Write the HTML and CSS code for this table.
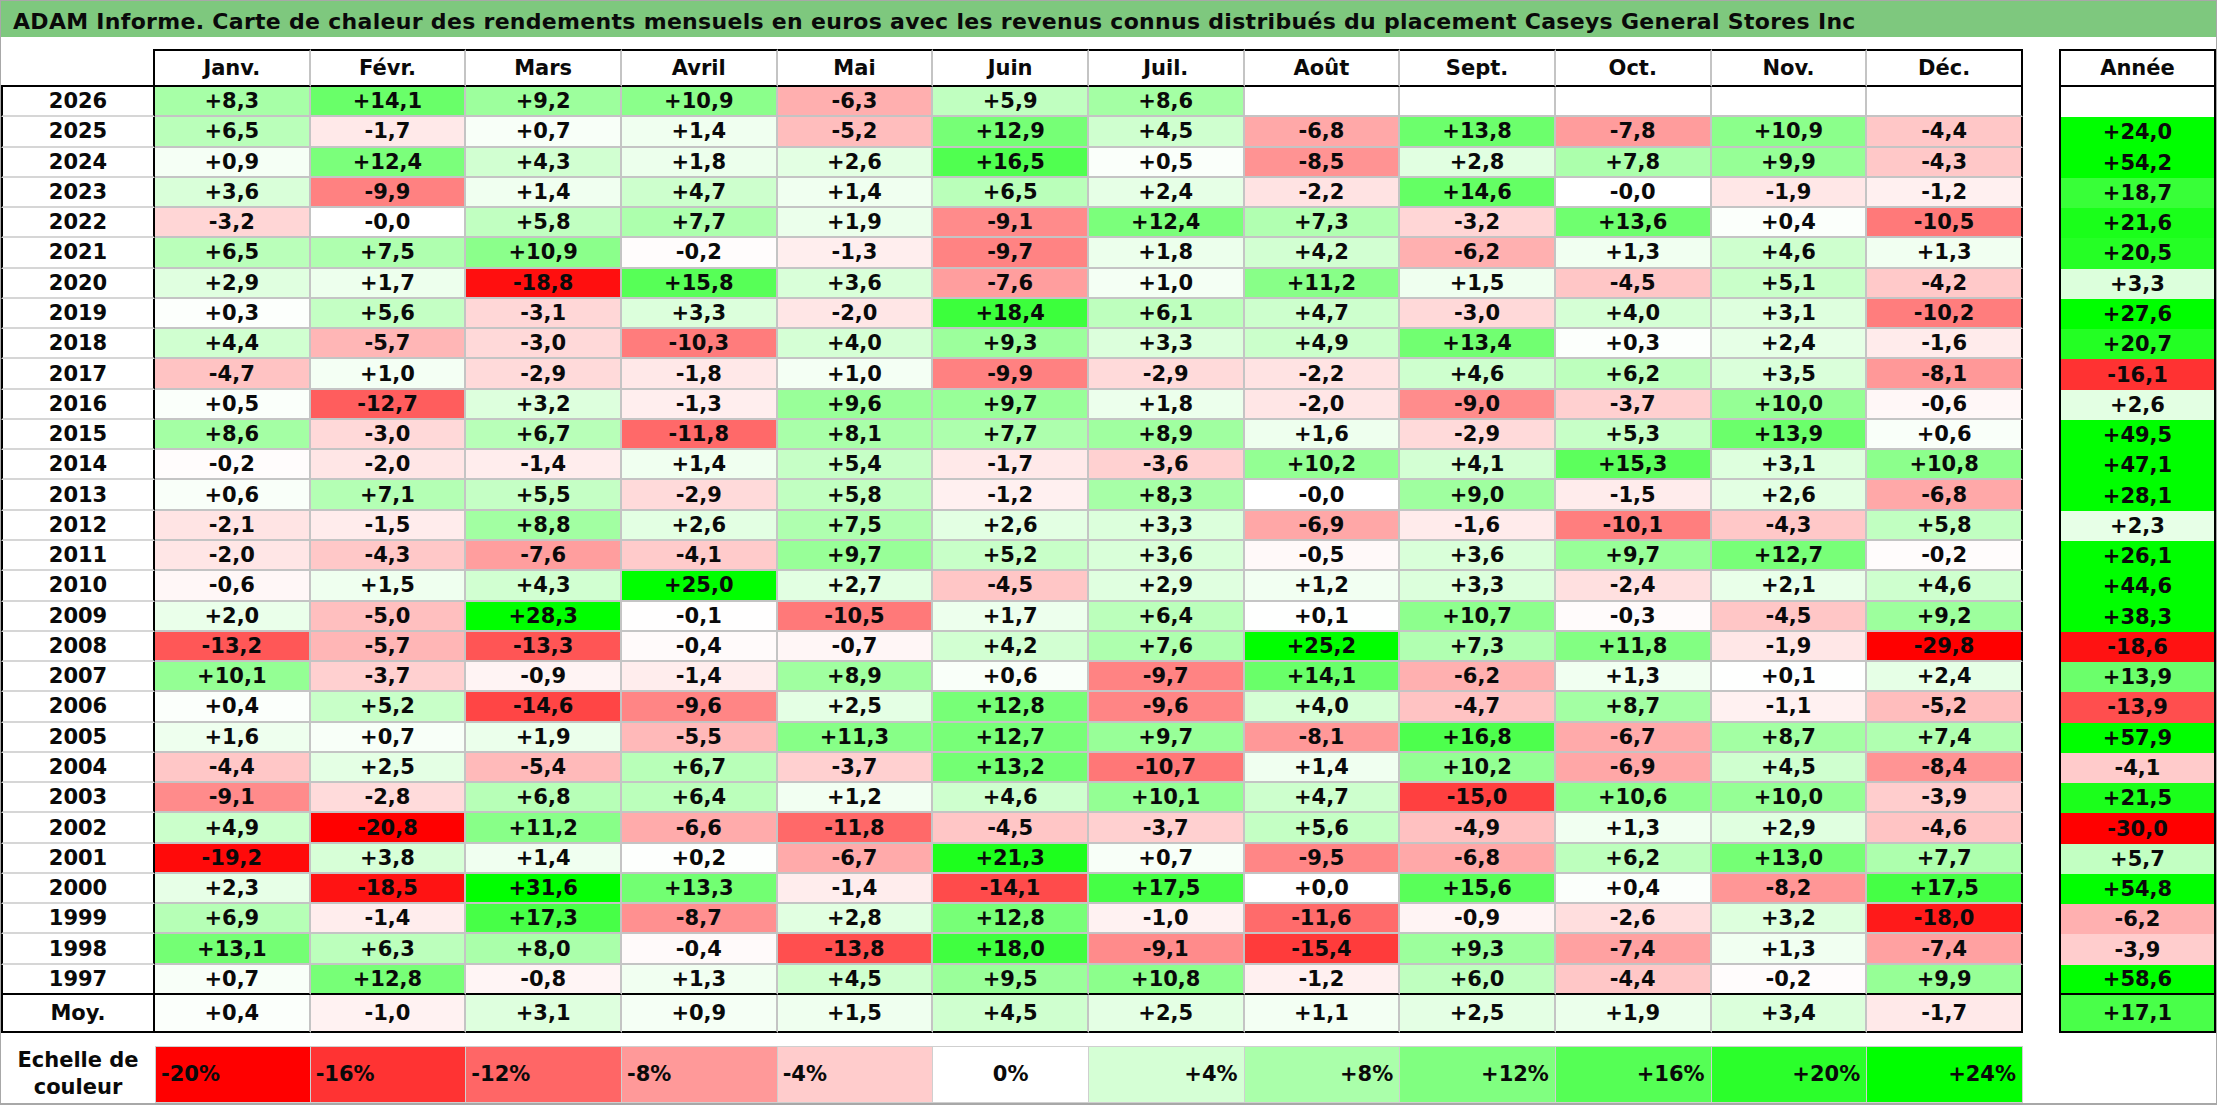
FILE: index.html
```html
<!DOCTYPE html>
<html lang="fr">
<head>
<meta charset="utf-8">
<title>ADAM Informe - Caseys General Stores Inc</title>
<link rel="stylesheet" href="styles.css">
</head>
<body>
<div class="page">
  <div class="title">ADAM Informe. Carte de chaleur des rendements mensuels en euros avec les revenus connus distribués du placement Caseys General Stores Inc</div>
  <div class="tables">
    <table class="heat">
      <colgroup><col class="yc"><col><col><col><col><col><col><col><col><col><col><col><col></colgroup>
      <thead>
        <tr><th class="corner"></th><th class="first">Janv.</th><th>Févr.</th><th>Mars</th><th>Avril</th><th>Mai</th><th>Juin</th><th>Juil.</th><th>Août</th><th>Sept.</th><th>Oct.</th><th>Nov.</th><th class="last">Déc.</th></tr>
      </thead>
      <tbody>
        <tr><th>2026</th><td style="--v:8.3">+8,3</td><td style="--v:14.1">+14,1</td><td style="--v:9.2">+9,2</td><td style="--v:10.9">+10,9</td><td style="--v:-6.3">-6,3</td><td style="--v:5.9">+5,9</td><td style="--v:8.6">+8,6</td><td></td><td></td><td></td><td></td><td></td></tr>
        <tr><th>2025</th><td style="--v:6.5">+6,5</td><td style="--v:-1.7">-1,7</td><td style="--v:0.7">+0,7</td><td style="--v:1.4">+1,4</td><td style="--v:-5.2">-5,2</td><td style="--v:12.9">+12,9</td><td style="--v:4.5">+4,5</td><td style="--v:-6.8">-6,8</td><td style="--v:13.8">+13,8</td><td style="--v:-7.8">-7,8</td><td style="--v:10.9">+10,9</td><td style="--v:-4.4">-4,4</td></tr>
        <tr><th>2024</th><td style="--v:0.9">+0,9</td><td style="--v:12.4">+12,4</td><td style="--v:4.3">+4,3</td><td style="--v:1.8">+1,8</td><td style="--v:2.6">+2,6</td><td style="--v:16.5">+16,5</td><td style="--v:0.5">+0,5</td><td style="--v:-8.5">-8,5</td><td style="--v:2.8">+2,8</td><td style="--v:7.8">+7,8</td><td style="--v:9.9">+9,9</td><td style="--v:-4.3">-4,3</td></tr>
        <tr><th>2023</th><td style="--v:3.6">+3,6</td><td style="--v:-9.9">-9,9</td><td style="--v:1.4">+1,4</td><td style="--v:4.7">+4,7</td><td style="--v:1.4">+1,4</td><td style="--v:6.5">+6,5</td><td style="--v:2.4">+2,4</td><td style="--v:-2.2">-2,2</td><td style="--v:14.6">+14,6</td><td style="--v:0">-0,0</td><td style="--v:-1.9">-1,9</td><td style="--v:-1.2">-1,2</td></tr>
        <tr><th>2022</th><td style="--v:-3.2">-3,2</td><td style="--v:0">-0,0</td><td style="--v:5.8">+5,8</td><td style="--v:7.7">+7,7</td><td style="--v:1.9">+1,9</td><td style="--v:-9.1">-9,1</td><td style="--v:12.4">+12,4</td><td style="--v:7.3">+7,3</td><td style="--v:-3.2">-3,2</td><td style="--v:13.6">+13,6</td><td style="--v:0.4">+0,4</td><td style="--v:-10.5">-10,5</td></tr>
        <tr><th>2021</th><td style="--v:6.5">+6,5</td><td style="--v:7.5">+7,5</td><td style="--v:10.9">+10,9</td><td style="--v:-0.2">-0,2</td><td style="--v:-1.3">-1,3</td><td style="--v:-9.7">-9,7</td><td style="--v:1.8">+1,8</td><td style="--v:4.2">+4,2</td><td style="--v:-6.2">-6,2</td><td style="--v:1.3">+1,3</td><td style="--v:4.6">+4,6</td><td style="--v:1.3">+1,3</td></tr>
        <tr><th>2020</th><td style="--v:2.9">+2,9</td><td style="--v:1.7">+1,7</td><td style="--v:-18.8">-18,8</td><td style="--v:15.8">+15,8</td><td style="--v:3.6">+3,6</td><td style="--v:-7.6">-7,6</td><td style="--v:1.0">+1,0</td><td style="--v:11.2">+11,2</td><td style="--v:1.5">+1,5</td><td style="--v:-4.5">-4,5</td><td style="--v:5.1">+5,1</td><td style="--v:-4.2">-4,2</td></tr>
        <tr><th>2019</th><td style="--v:0.3">+0,3</td><td style="--v:5.6">+5,6</td><td style="--v:-3.1">-3,1</td><td style="--v:3.3">+3,3</td><td style="--v:-2.0">-2,0</td><td style="--v:18.4">+18,4</td><td style="--v:6.1">+6,1</td><td style="--v:4.7">+4,7</td><td style="--v:-3.0">-3,0</td><td style="--v:4.0">+4,0</td><td style="--v:3.1">+3,1</td><td style="--v:-10.2">-10,2</td></tr>
        <tr><th>2018</th><td style="--v:4.4">+4,4</td><td style="--v:-5.7">-5,7</td><td style="--v:-3.0">-3,0</td><td style="--v:-10.3">-10,3</td><td style="--v:4.0">+4,0</td><td style="--v:9.3">+9,3</td><td style="--v:3.3">+3,3</td><td style="--v:4.9">+4,9</td><td style="--v:13.4">+13,4</td><td style="--v:0.3">+0,3</td><td style="--v:2.4">+2,4</td><td style="--v:-1.6">-1,6</td></tr>
        <tr><th>2017</th><td style="--v:-4.7">-4,7</td><td style="--v:1.0">+1,0</td><td style="--v:-2.9">-2,9</td><td style="--v:-1.8">-1,8</td><td style="--v:1.0">+1,0</td><td style="--v:-9.9">-9,9</td><td style="--v:-2.9">-2,9</td><td style="--v:-2.2">-2,2</td><td style="--v:4.6">+4,6</td><td style="--v:6.2">+6,2</td><td style="--v:3.5">+3,5</td><td style="--v:-8.1">-8,1</td></tr>
        <tr><th>2016</th><td style="--v:0.5">+0,5</td><td style="--v:-12.7">-12,7</td><td style="--v:3.2">+3,2</td><td style="--v:-1.3">-1,3</td><td style="--v:9.6">+9,6</td><td style="--v:9.7">+9,7</td><td style="--v:1.8">+1,8</td><td style="--v:-2.0">-2,0</td><td style="--v:-9.0">-9,0</td><td style="--v:-3.7">-3,7</td><td style="--v:10.0">+10,0</td><td style="--v:-0.6">-0,6</td></tr>
        <tr><th>2015</th><td style="--v:8.6">+8,6</td><td style="--v:-3.0">-3,0</td><td style="--v:6.7">+6,7</td><td style="--v:-11.8">-11,8</td><td style="--v:8.1">+8,1</td><td style="--v:7.7">+7,7</td><td style="--v:8.9">+8,9</td><td style="--v:1.6">+1,6</td><td style="--v:-2.9">-2,9</td><td style="--v:5.3">+5,3</td><td style="--v:13.9">+13,9</td><td style="--v:0.6">+0,6</td></tr>
        <tr><th>2014</th><td style="--v:-0.2">-0,2</td><td style="--v:-2.0">-2,0</td><td style="--v:-1.4">-1,4</td><td style="--v:1.4">+1,4</td><td style="--v:5.4">+5,4</td><td style="--v:-1.7">-1,7</td><td style="--v:-3.6">-3,6</td><td style="--v:10.2">+10,2</td><td style="--v:4.1">+4,1</td><td style="--v:15.3">+15,3</td><td style="--v:3.1">+3,1</td><td style="--v:10.8">+10,8</td></tr>
        <tr><th>2013</th><td style="--v:0.6">+0,6</td><td style="--v:7.1">+7,1</td><td style="--v:5.5">+5,5</td><td style="--v:-2.9">-2,9</td><td style="--v:5.8">+5,8</td><td style="--v:-1.2">-1,2</td><td style="--v:8.3">+8,3</td><td style="--v:0">-0,0</td><td style="--v:9.0">+9,0</td><td style="--v:-1.5">-1,5</td><td style="--v:2.6">+2,6</td><td style="--v:-6.8">-6,8</td></tr>
        <tr><th>2012</th><td style="--v:-2.1">-2,1</td><td style="--v:-1.5">-1,5</td><td style="--v:8.8">+8,8</td><td style="--v:2.6">+2,6</td><td style="--v:7.5">+7,5</td><td style="--v:2.6">+2,6</td><td style="--v:3.3">+3,3</td><td style="--v:-6.9">-6,9</td><td style="--v:-1.6">-1,6</td><td style="--v:-10.1">-10,1</td><td style="--v:-4.3">-4,3</td><td style="--v:5.8">+5,8</td></tr>
        <tr><th>2011</th><td style="--v:-2.0">-2,0</td><td style="--v:-4.3">-4,3</td><td style="--v:-7.6">-7,6</td><td style="--v:-4.1">-4,1</td><td style="--v:9.7">+9,7</td><td style="--v:5.2">+5,2</td><td style="--v:3.6">+3,6</td><td style="--v:-0.5">-0,5</td><td style="--v:3.6">+3,6</td><td style="--v:9.7">+9,7</td><td style="--v:12.7">+12,7</td><td style="--v:-0.2">-0,2</td></tr>
        <tr><th>2010</th><td style="--v:-0.6">-0,6</td><td style="--v:1.5">+1,5</td><td style="--v:4.3">+4,3</td><td style="--v:25.0">+25,0</td><td style="--v:2.7">+2,7</td><td style="--v:-4.5">-4,5</td><td style="--v:2.9">+2,9</td><td style="--v:1.2">+1,2</td><td style="--v:3.3">+3,3</td><td style="--v:-2.4">-2,4</td><td style="--v:2.1">+2,1</td><td style="--v:4.6">+4,6</td></tr>
        <tr><th>2009</th><td style="--v:2.0">+2,0</td><td style="--v:-5.0">-5,0</td><td style="--v:28.3">+28,3</td><td style="--v:-0.1">-0,1</td><td style="--v:-10.5">-10,5</td><td style="--v:1.7">+1,7</td><td style="--v:6.4">+6,4</td><td style="--v:0.1">+0,1</td><td style="--v:10.7">+10,7</td><td style="--v:-0.3">-0,3</td><td style="--v:-4.5">-4,5</td><td style="--v:9.2">+9,2</td></tr>
        <tr><th>2008</th><td style="--v:-13.2">-13,2</td><td style="--v:-5.7">-5,7</td><td style="--v:-13.3">-13,3</td><td style="--v:-0.4">-0,4</td><td style="--v:-0.7">-0,7</td><td style="--v:4.2">+4,2</td><td style="--v:7.6">+7,6</td><td style="--v:25.2">+25,2</td><td style="--v:7.3">+7,3</td><td style="--v:11.8">+11,8</td><td style="--v:-1.9">-1,9</td><td style="--v:-29.8">-29,8</td></tr>
        <tr><th>2007</th><td style="--v:10.1">+10,1</td><td style="--v:-3.7">-3,7</td><td style="--v:-0.9">-0,9</td><td style="--v:-1.4">-1,4</td><td style="--v:8.9">+8,9</td><td style="--v:0.6">+0,6</td><td style="--v:-9.7">-9,7</td><td style="--v:14.1">+14,1</td><td style="--v:-6.2">-6,2</td><td style="--v:1.3">+1,3</td><td style="--v:0.1">+0,1</td><td style="--v:2.4">+2,4</td></tr>
        <tr><th>2006</th><td style="--v:0.4">+0,4</td><td style="--v:5.2">+5,2</td><td style="--v:-14.6">-14,6</td><td style="--v:-9.6">-9,6</td><td style="--v:2.5">+2,5</td><td style="--v:12.8">+12,8</td><td style="--v:-9.6">-9,6</td><td style="--v:4.0">+4,0</td><td style="--v:-4.7">-4,7</td><td style="--v:8.7">+8,7</td><td style="--v:-1.1">-1,1</td><td style="--v:-5.2">-5,2</td></tr>
        <tr><th>2005</th><td style="--v:1.6">+1,6</td><td style="--v:0.7">+0,7</td><td style="--v:1.9">+1,9</td><td style="--v:-5.5">-5,5</td><td style="--v:11.3">+11,3</td><td style="--v:12.7">+12,7</td><td style="--v:9.7">+9,7</td><td style="--v:-8.1">-8,1</td><td style="--v:16.8">+16,8</td><td style="--v:-6.7">-6,7</td><td style="--v:8.7">+8,7</td><td style="--v:7.4">+7,4</td></tr>
        <tr><th>2004</th><td style="--v:-4.4">-4,4</td><td style="--v:2.5">+2,5</td><td style="--v:-5.4">-5,4</td><td style="--v:6.7">+6,7</td><td style="--v:-3.7">-3,7</td><td style="--v:13.2">+13,2</td><td style="--v:-10.7">-10,7</td><td style="--v:1.4">+1,4</td><td style="--v:10.2">+10,2</td><td style="--v:-6.9">-6,9</td><td style="--v:4.5">+4,5</td><td style="--v:-8.4">-8,4</td></tr>
        <tr><th>2003</th><td style="--v:-9.1">-9,1</td><td style="--v:-2.8">-2,8</td><td style="--v:6.8">+6,8</td><td style="--v:6.4">+6,4</td><td style="--v:1.2">+1,2</td><td style="--v:4.6">+4,6</td><td style="--v:10.1">+10,1</td><td style="--v:4.7">+4,7</td><td style="--v:-15.0">-15,0</td><td style="--v:10.6">+10,6</td><td style="--v:10.0">+10,0</td><td style="--v:-3.9">-3,9</td></tr>
        <tr><th>2002</th><td style="--v:4.9">+4,9</td><td style="--v:-20.8">-20,8</td><td style="--v:11.2">+11,2</td><td style="--v:-6.6">-6,6</td><td style="--v:-11.8">-11,8</td><td style="--v:-4.5">-4,5</td><td style="--v:-3.7">-3,7</td><td style="--v:5.6">+5,6</td><td style="--v:-4.9">-4,9</td><td style="--v:1.3">+1,3</td><td style="--v:2.9">+2,9</td><td style="--v:-4.6">-4,6</td></tr>
        <tr><th>2001</th><td style="--v:-19.2">-19,2</td><td style="--v:3.8">+3,8</td><td style="--v:1.4">+1,4</td><td style="--v:0.2">+0,2</td><td style="--v:-6.7">-6,7</td><td style="--v:21.3">+21,3</td><td style="--v:0.7">+0,7</td><td style="--v:-9.5">-9,5</td><td style="--v:-6.8">-6,8</td><td style="--v:6.2">+6,2</td><td style="--v:13.0">+13,0</td><td style="--v:7.7">+7,7</td></tr>
        <tr><th>2000</th><td style="--v:2.3">+2,3</td><td style="--v:-18.5">-18,5</td><td style="--v:31.6">+31,6</td><td style="--v:13.3">+13,3</td><td style="--v:-1.4">-1,4</td><td style="--v:-14.1">-14,1</td><td style="--v:17.5">+17,5</td><td style="--v:0">+0,0</td><td style="--v:15.6">+15,6</td><td style="--v:0.4">+0,4</td><td style="--v:-8.2">-8,2</td><td style="--v:17.5">+17,5</td></tr>
        <tr><th>1999</th><td style="--v:6.9">+6,9</td><td style="--v:-1.4">-1,4</td><td style="--v:17.3">+17,3</td><td style="--v:-8.7">-8,7</td><td style="--v:2.8">+2,8</td><td style="--v:12.8">+12,8</td><td style="--v:-1.0">-1,0</td><td style="--v:-11.6">-11,6</td><td style="--v:-0.9">-0,9</td><td style="--v:-2.6">-2,6</td><td style="--v:3.2">+3,2</td><td style="--v:-18.0">-18,0</td></tr>
        <tr><th>1998</th><td style="--v:13.1">+13,1</td><td style="--v:6.3">+6,3</td><td style="--v:8.0">+8,0</td><td style="--v:-0.4">-0,4</td><td style="--v:-13.8">-13,8</td><td style="--v:18.0">+18,0</td><td style="--v:-9.1">-9,1</td><td style="--v:-15.4">-15,4</td><td style="--v:9.3">+9,3</td><td style="--v:-7.4">-7,4</td><td style="--v:1.3">+1,3</td><td style="--v:-7.4">-7,4</td></tr>
        <tr class="lastrow"><th>1997</th><td style="--v:0.7">+0,7</td><td style="--v:12.8">+12,8</td><td style="--v:-0.8">-0,8</td><td style="--v:1.3">+1,3</td><td style="--v:4.5">+4,5</td><td style="--v:9.5">+9,5</td><td style="--v:10.8">+10,8</td><td style="--v:-1.2">-1,2</td><td style="--v:6.0">+6,0</td><td style="--v:-4.4">-4,4</td><td style="--v:-0.2">-0,2</td><td style="--v:9.9">+9,9</td></tr>
      </tbody>
      <tfoot>
        <tr><th>Moy.</th><td style="--v:0.4">+0,4</td><td style="--v:-1.0">-1,0</td><td style="--v:3.1">+3,1</td><td style="--v:0.9">+0,9</td><td style="--v:1.5">+1,5</td><td style="--v:4.5">+4,5</td><td style="--v:2.5">+2,5</td><td style="--v:1.1">+1,1</td><td style="--v:2.5">+2,5</td><td style="--v:1.9">+1,9</td><td style="--v:3.4">+3,4</td><td style="--v:-1.7">-1,7</td></tr>
      </tfoot>
    </table>

    <table class="annual">
      <thead><tr><th>Année</th></tr></thead>
      <tbody>
        <tr><td></td></tr>
        <tr><td style="--v:24.0">+24,0</td></tr>
        <tr><td style="--v:54.2">+54,2</td></tr>
        <tr><td style="--v:18.7">+18,7</td></tr>
        <tr><td style="--v:21.6">+21,6</td></tr>
        <tr><td style="--v:20.5">+20,5</td></tr>
        <tr><td style="--v:3.3">+3,3</td></tr>
        <tr><td style="--v:27.6">+27,6</td></tr>
        <tr><td style="--v:20.7">+20,7</td></tr>
        <tr><td style="--v:-16.1">-16,1</td></tr>
        <tr><td style="--v:2.6">+2,6</td></tr>
        <tr><td style="--v:49.5">+49,5</td></tr>
        <tr><td style="--v:47.1">+47,1</td></tr>
        <tr><td style="--v:28.1">+28,1</td></tr>
        <tr><td style="--v:2.3">+2,3</td></tr>
        <tr><td style="--v:26.1">+26,1</td></tr>
        <tr><td style="--v:44.6">+44,6</td></tr>
        <tr><td style="--v:38.3">+38,3</td></tr>
        <tr><td style="--v:-18.6">-18,6</td></tr>
        <tr><td style="--v:13.9">+13,9</td></tr>
        <tr><td style="--v:-13.9">-13,9</td></tr>
        <tr><td style="--v:57.9">+57,9</td></tr>
        <tr><td style="--v:-4.1">-4,1</td></tr>
        <tr><td style="--v:21.5">+21,5</td></tr>
        <tr><td style="--v:-30.0">-30,0</td></tr>
        <tr><td style="--v:5.7">+5,7</td></tr>
        <tr><td style="--v:54.8">+54,8</td></tr>
        <tr><td style="--v:-6.2">-6,2</td></tr>
        <tr><td style="--v:-3.9">-3,9</td></tr>
        <tr class="lastrow"><td style="--v:58.6">+58,6</td></tr>
      </tbody>
      <tfoot><tr><td style="--v:17.1">+17,1</td></tr></tfoot>
    </table>
  </div>

  <table class="legend">
    <colgroup><col class="yc"><col><col><col><col><col><col><col><col><col><col><col><col></colgroup>
    <tr>
      <th class="legend-label">Echelle de<br>couleur</th>
      <td class="neg first" style="--v:-20">-20%</td>
      <td class="neg" style="--v:-16">-16%</td>
      <td class="neg" style="--v:-12">-12%</td>
      <td class="neg" style="--v:-8">-8%</td>
      <td class="neg" style="--v:-4">-4%</td>
      <td class="zero" style="--v:0">0%</td>
      <td class="pos" style="--v:4">+4%</td>
      <td class="pos" style="--v:8">+8%</td>
      <td class="pos" style="--v:12">+12%</td>
      <td class="pos" style="--v:16">+16%</td>
      <td class="pos" style="--v:20">+20%</td>
      <td class="pos" style="--v:24">+24%</td>
    </tr>
  </table>
</div>
</body>
</html>
```

FILE: styles.css
```css
html, body {
  margin: 0;
  padding: 0;
  background: #ffffff;
}

body {
  font-family: "DejaVu Sans", "Liberation Sans", sans-serif;
  font-weight: bold;
  color: #0a0a0a;
}

.page {
  width: 2217px;
  height: 1105px;
  box-sizing: border-box;
  border: 1px solid #a8a8a8;
  border-bottom-width: 2px;
  overflow: hidden;
}

.title {
  height: 36px;
  box-sizing: border-box;
  padding: 8px 0 0 12px;
  background: #7ec87e;
  font-size: 22px;
  line-height: 25px;
  letter-spacing: 0.3px;
  white-space: nowrap;
}

.tables {
  display: flex;
  align-items: flex-start;
  margin-top: 12px;
}

table {
  border-spacing: 0;
  border-collapse: separate;
  table-layout: fixed;
}

th, td {
  padding: 0;
  text-align: center;
  vertical-align: middle;
  font-size: 21px;
  white-space: nowrap;
  box-sizing: border-box;
}

/* colour scale: red at -20, white at 0, green at +24 */
td {
  --v: 0;
  --r: clamp(0, 255 - 10.625 * var(--v), 255);
  --g: clamp(0, 255 + 12.75 * var(--v), 255);
  background: rgb(var(--r) var(--g) min(var(--r), var(--g)));
}

/* main heat table */
.heat {
  width: 2022px;
}

.heat col.yc {
  width: 154px;
}

.heat thead tr {
  height: 38px;
}

.heat thead th {
  border-top: 2px solid #000;
  border-bottom: 2px solid #000;
  border-right: 2px solid #c4c4c4;
}

.heat thead th.corner {
  border-top: 0;
  border-right: 2px solid #000;
}

.heat thead th.last {
  border-right: 2px solid #000;
}

.heat tbody tr {
  height: 30.27px;
}

.heat tbody th,
.heat tfoot th {
  border-left: 2px solid #000;
  border-right: 2px solid #000;
  border-bottom: 2px solid #d6d6d6;
}

.heat tbody td {
  border-right: 2px solid #c4c4c4;
  border-bottom: 2px solid #c4c4c4;
}

.heat tbody td:last-child,
.heat tfoot td:last-child {
  border-right: 2px solid #000;
}

.heat tbody tr.lastrow th,
.heat tbody tr.lastrow td {
  border-bottom: 2px solid #000;
}

.heat tfoot tr {
  height: 38px;
}

.heat tfoot td {
  border-right: 2px solid #c4c4c4;
  border-bottom: 2px solid #000;
}

.heat tfoot th {
  border-bottom: 2px solid #000;
}

/* annual column */
.annual {
  width: 157px;
  margin-left: 36px;
}

.annual thead tr {
  height: 38px;
}

.annual thead th {
  border: 2px solid #000;
}

.annual tbody tr {
  height: 30.27px;
}

.annual td {
  border-left: 2px solid #000;
  border-right: 2px solid #000;
}

.annual tbody tr.lastrow td {
  border-bottom: 2px solid #000;
}

.annual tfoot tr {
  height: 38px;
}

.annual tfoot td {
  border-bottom: 2px solid #000;
}

/* legend */
.legend {
  width: 2022px;
  margin-top: 13px;
}

.legend col.yc {
  width: 154px;
}

.legend tr {
  height: 57px;
}

.legend-label {
  font-size: 21px;
  line-height: 27px;
}

.legend td {
  border-top: 1px solid #cfcfcf;
  border-bottom: 1px solid #cfcfcf;
  border-right: 1px solid #cfcfcf;
}

.legend td.first {
  border-left: 1px solid #cfcfcf;
}

.legend td.neg {
  text-align: left;
  padding-left: 5px;
}

.legend td.zero {
  text-align: center;
}

.legend td.pos {
  text-align: right;
  padding-right: 6px;
}
```
